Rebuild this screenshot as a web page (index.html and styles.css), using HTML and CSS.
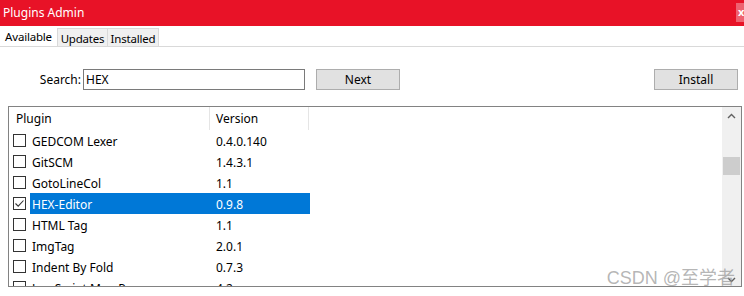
FILE: index.html
```html
<!DOCTYPE html>
<html lang="en">

<head>
    <meta charset="UTF-8">
    <title>Plugins Admin</title>
    <link rel="stylesheet" href="styles.css">
</head>

<body>

    <div class="titlebar">
        <span class="title">Plugins Admin</span>
        <span class="close-btn">x</span>
    </div>

    <div class="tabs">
        <div class="tab active">Available</div>
        <div class="tab tab-updates">Updates</div>
        <div class="tab tab-installed">Installed</div>
    </div>

    <div class="search-row">
        <label for="search" class="search-label">Search:</label>
        <input type="text" id="search" class="search-input" value="HEX">
        <button class="btn next-btn">Next</button>
        <button class="btn install-btn">Install</button>
    </div>

    <div class="list">
        <div class="list-main">
            <div class="list-header">
                <div class="col-name">Plugin</div>
                <div class="col-version">Version</div>
            </div>
            <div class="list-body">
                <div class="row">
                    <span class="check"></span>
                    <span class="cell-name">GEDCOM Lexer</span>
                    <span class="cell-version">0.4.0.140</span>
                </div>
                <div class="row">
                    <span class="check"></span>
                    <span class="cell-name">GitSCM</span>
                    <span class="cell-version">1.4.3.1</span>
                </div>
                <div class="row">
                    <span class="check"></span>
                    <span class="cell-name">GotoLineCol</span>
                    <span class="cell-version">1.1</span>
                </div>
                <div class="row selected">
                    <span class="check checked">
                        <svg width="11" height="11" viewBox="0 0 11 11">
                            <path d="M1.5 5.5 L4.2 8.2 L9.5 2.5" fill="none" stroke="#333" stroke-width="1.1" />
                        </svg>
                    </span>
                    <span class="cell-name">HEX-Editor</span>
                    <span class="cell-version">0.9.8</span>
                </div>
                <div class="row">
                    <span class="check"></span>
                    <span class="cell-name">HTML Tag</span>
                    <span class="cell-version">1.1</span>
                </div>
                <div class="row">
                    <span class="check"></span>
                    <span class="cell-name">ImgTag</span>
                    <span class="cell-version">2.0.1</span>
                </div>
                <div class="row">
                    <span class="check"></span>
                    <span class="cell-name">Indent By Fold</span>
                    <span class="cell-version">0.7.3</span>
                </div>
                <div class="row">
                    <span class="check"></span>
                    <span class="cell-name">JavaScript Map Parser</span>
                    <span class="cell-version">4.2</span>
                </div>
            </div>
        </div>
        <div class="scrollbar">
            <svg class="arrow" width="9" height="6" viewBox="0 0 9 6">
                <path d="M1 5 L4.5 1.5 L8 5" fill="none" stroke="#606060" stroke-width="1.4" />
            </svg>
            <div class="thumb"></div>
            <svg class="arrow arrow-down" width="9" height="6" viewBox="0 0 9 6">
                <path d="M1 1 L4.5 4.5 L8 1" fill="none" stroke="#606060" stroke-width="1.4" />
            </svg>
        </div>
        <div class="watermark">CSDN @至学者</div>
    </div>

</body>

</html>
```

FILE: styles.css
```css
body {
    margin: 0;
    font-family: "Noto Sans", "Noto Sans CJK SC", sans-serif;
    font-size: 12px;
    color: #000;
    background-color: #fff;
    width: 744px;
    height: 296px;
    overflow: hidden;
}

.titlebar {
    height: 26px;
    background-color: #e81227;
    color: #fff;
    display: flex;
    align-items: flex-start;
    overflow: hidden;
}

.title {
    font-size: 12px;
    line-height: 25px;
    padding-left: 3px;
}

.close-btn {
    margin-left: auto;
    margin-top: 3px;
    width: 8px;
    height: 19px;
    background-color: #ee6270;
    color: #fff;
    font-size: 11px;
    line-height: 18px;
    padding-left: 2px;
    box-sizing: border-box;
    font-weight: bold;
    overflow: hidden;
}

.tabs {
    display: flex;
    height: 20px;
    border-bottom: 1px solid #d9d9d9;
}

.tab {
    font-size: 11.5px;
    text-align: center;
    line-height: 20px;
    background-color: #f0f0f0;
    border: 1px solid #d9d9d9;
    border-bottom: none;
    border-left: none;
    margin-top: 2px;
    letter-spacing: -0.2px;
}

.tab.active {
    width: 57px;
    background-color: #fff;
    border: none;
    margin-top: 0;
    line-height: 21px;
}

.tab-updates {
    width: 49px;
    border-left: 1px solid #d9d9d9;
}

.tab-installed {
    width: 50px;
}

.search-row {
    display: flex;
    align-items: center;
    margin-top: 22px;
    height: 21px;
}

.search-label {
    width: 81px;
    text-align: right;
    margin-right: 2px;
}

.search-input {
    width: 222px;
    height: 21px;
    box-sizing: border-box;
    border: 1px solid #7a7a7a;
    padding: 0 2px;
    font-family: inherit;
    font-size: 12px;
    outline: none;
}

.btn {
    width: 84px;
    height: 21px;
    box-sizing: border-box;
    background-color: #e1e1e1;
    border: 1px solid #adadad;
    font-family: inherit;
    font-size: 12px;
    padding: 0;
}

.next-btn {
    margin-left: 11px;
}

.install-btn {
    margin-left: auto;
    margin-right: 6px;
}

.list {
    position: relative;
    display: flex;
    margin: 16px 2px 0 8px;
    height: 181px;
    box-sizing: border-box;
    border: 1px solid #828282;
}

.list-main {
    flex: 1;
    overflow: hidden;
}

.list-header {
    display: flex;
    height: 23px;
    line-height: 24px;
}

.col-name {
    width: 193px;
    padding-left: 7px;
    border-right: 1px solid #e5e5e5;
}

.col-version {
    width: 92px;
    padding-left: 6px;
    border-right: 1px solid #e5e5e5;
}

.row {
    display: flex;
    align-items: center;
    height: 21px;
    width: 301px;
}

.check {
    width: 13px;
    height: 13px;
    box-sizing: border-box;
    border: 1px solid #333;
    margin-left: 4px;
    margin-right: 4px;
    background-color: #fff;
    display: flex;
    align-items: center;
    justify-content: center;
}

.cell-name {
    width: 180px;
    padding-left: 2px;
    padding-top: 2px;
    line-height: 19px;
    white-space: nowrap;
}

.cell-version {
    flex: 1;
    padding-left: 4px;
    padding-top: 2px;
    line-height: 19px;
}

.row.selected .cell-name,
.row.selected .cell-version {
    background-color: #0078d7;
    color: #fff;
}

.scrollbar {
    width: 19px;
    background-color: #f0f0f0;
    display: flex;
    flex-direction: column;
    align-items: center;
}

.arrow {
    margin-top: 6px;
}

.arrow-down {
    margin-top: auto;
    margin-bottom: 3px;
}

.thumb {
    width: 17px;
    height: 18px;
    background-color: #cdcdcd;
    margin-top: 38px;
}

.watermark {
    position: absolute;
    right: 6px;
    bottom: -3px;
    font-family: "Liberation Sans", "Noto Sans CJK SC", sans-serif;
    font-size: 18px;
    color: rgba(150, 150, 150, 0.7);
}
```
